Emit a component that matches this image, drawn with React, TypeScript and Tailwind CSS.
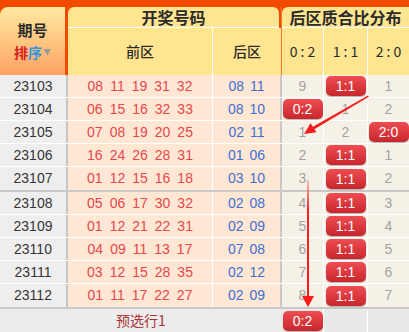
import React from 'react';

type Row = {
  no: string;
  front: string[];
  back: string[];
  dist: string[];
};

const block1: Row[] = [
  { no: '23103', front: ['08', '11', '19', '31', '32'], back: ['08', '11'], dist: ['9', '1:1', '1'] },
  { no: '23104', front: ['06', '15', '16', '32', '33'], back: ['08', '10'], dist: ['0:2', '1', '2'] },
  { no: '23105', front: ['07', '08', '19', '20', '25'], back: ['02', '11'], dist: ['1', '2', '2:0'] },
  { no: '23106', front: ['16', '24', '26', '28', '31'], back: ['01', '06'], dist: ['2', '1:1', '1'] },
  { no: '23107', front: ['01', '12', '15', '16', '18'], back: ['03', '10'], dist: ['3', '1:1', '2'] },
];

const block2: Row[] = [
  { no: '23108', front: ['05', '06', '17', '30', '32'], back: ['02', '08'], dist: ['4', '1:1', '3'] },
  { no: '23109', front: ['01', '12', '21', '22', '31'], back: ['02', '09'], dist: ['5', '1:1', '4'] },
  { no: '23110', front: ['04', '09', '11', '13', '17'], back: ['07', '08'], dist: ['6', '1:1', '5'] },
  { no: '23111', front: ['03', '12', '15', '28', '35'], back: ['02', '12'], dist: ['7', '1:1', '6'] },
  { no: '23112', front: ['01', '11', '17', '22', '27'], back: ['02', '09'], dist: ['8', '1:1', '7'] },
];

const Badge: React.FC<{ label: string }> = ({ label }) => (
  <span className="flex h-[20px] w-[40px] items-center justify-center rounded-[5px] bg-linear-to-b from-[#ee4d52] to-[#c7262c] text-[14px] leading-none text-white shadow-[0_1px_1px_rgba(0,0,0,0.25)]">
    {label}
  </span>
);

const DistCell: React.FC<{ value: string; className: string }> = ({ value, className }) => (
  <div className={`flex items-center justify-center ${className}`}>
    {value.includes(':') ? <Badge label={value} /> : <span className="text-[#a3a3a3]">{value}</span>}
  </div>
);

const DataRow: React.FC<{ row: Row; last: boolean }> = ({ row, last }) => (
  <div className={`flex text-[14px] ${last ? 'h-[25px] border-b-2 border-[#c9c9c9]' : 'h-[23px] border-b border-white'}`}>
    <div className="flex w-[68px] items-center justify-center border-r-2 border-[#c6c6c6] bg-[#efeeee] text-[#353535]">
      {row.no}
    </div>
    <div className="flex w-[145px] items-center justify-center gap-[7px] border-r border-white bg-[#ffe7d4] text-[#e5484d]">
      {row.front.map((n, i) => (
        <span key={i}>{n}</span>
      ))}
    </div>
    <div className="flex w-[69px] items-center justify-center gap-[6px] border-r-2 border-[#c9c9c9] bg-[#ffe7d4] text-[#3f6fd3]">
      {row.back.map((n, i) => (
        <span key={i}>{n}</span>
      ))}
    </div>
    <DistCell value={row.dist[0]} className="w-[42px] border-r border-white bg-[#f6f1e7]" />
    <DistCell value={row.dist[1]} className="w-[44px] border-r border-white bg-[#f6f1e7]" />
    <DistCell value={row.dist[2]} className="flex-1 bg-[#f6f1e7]" />
  </div>
);

export default function App() {
  return (
    <div
      className="relative h-[332px] w-[409px] overflow-hidden bg-white"
      style={{ fontFamily: '"Liberation Sans", "Noto Sans CJK SC", sans-serif' }}
    >
      {/* Header */}
      <div className="flex h-[75px] bg-[#f24a00] pt-[7px] text-[#2b2b2b]" style={{ fontFamily: '"Noto Sans CJK SC", sans-serif' }}>
        <div className="flex w-[65px] flex-col items-center justify-center rounded-tl-[8px] bg-linear-to-b from-[#ffe9a0] to-[#ffa264]">
          <span className="text-[15px] font-bold leading-[22px]">期号</span>
          <span className="flex items-center text-[14px] font-bold leading-[22px]">
            <span className="text-[#d71e1e]">排</span>
            <span className="text-[#2f95e0]">序</span>
            <span className="ml-[1px] text-[8px] text-[#9a9a9a]">▼</span>
          </span>
        </div>
        <div className="ml-[3px] flex w-[213px] flex-col">
          <div className="mr-[2px] flex h-[21px] items-center justify-center rounded-t-[6px] border-b border-white bg-[#ffe58f] text-[16px] font-bold">
            开奖号码
          </div>
          <div className="flex flex-1 bg-[#ffe58f] text-[14px] font-medium">
            <div className="flex w-[145px] items-center justify-center border-r border-white">前区</div>
            <div className="flex flex-1 items-center justify-center">后区</div>
          </div>
        </div>
        <div className="flex flex-1 flex-col border-l border-[#f57a2a]">
          <div className="flex h-[21px] items-center justify-center rounded-tl-[6px] border-b border-white bg-[#ffe58f] text-[16px] font-bold">
            后区质合比分布
          </div>
          <div className="flex flex-1 bg-[#ffe58f] text-[14px]">
            <div className="flex w-[42px] items-center justify-center border-r border-white">0 : 2</div>
            <div className="flex w-[44px] items-center justify-center border-r border-white">1 : 1</div>
            <div className="flex flex-1 items-center justify-center">2 : 0</div>
          </div>
        </div>
      </div>

      {/* Body */}
      {block1.map((r, i) => (
        <DataRow key={r.no} row={r} last={i === block1.length - 1} />
      ))}
      {block2.map((r, i) => (
        <DataRow key={r.no} row={r} last={i === block2.length - 1} />
      ))}

      {/* Footer */}
      <div className="flex h-[23px] text-[14px]">
        <div className="flex w-[282px] items-center justify-center bg-[#ececec] text-[#a93434]" style={{ fontFamily: '"Noto Sans CJK SC", sans-serif' }}>
          预选行1
        </div>
        <DistCell value="0:2" className="w-[42px] border-r border-white bg-[#e9e9e9]" />
        <DistCell value="" className="w-[44px] border-r border-white bg-[#e9e9e9]" />
        <DistCell value="" className="flex-1 bg-[#e9e9e9]" />
      </div>

      {/* Annotation arrows */}
      <svg className="pointer-events-none absolute left-0 top-0" width="409" height="332" viewBox="0 0 409 332">
        <defs>
          <linearGradient id="fade" x1="0" y1="0" x2="0" y2="1">
            <stop offset="0" stopColor="#ff3030" stopOpacity="0.25" />
            <stop offset="0.25" stopColor="#ff2020" stopOpacity="1" />
            <stop offset="1" stopColor="#ff1a1a" stopOpacity="1" />
          </linearGradient>
        </defs>
        <polygon points="368,95.5 368.8,96.8 313,130 311.6,127.6" fill="#f21d1d" />
        <polygon points="304,134 310.6,123.2 316.4,132.2" fill="#f21d1d" />
        <rect x="307" y="180" width="2" height="118" fill="url(#fade)" />
        <polygon points="308,307 302,296 314,296" fill="#ff1a1a" />
      </svg>
    </div>
  );
}
